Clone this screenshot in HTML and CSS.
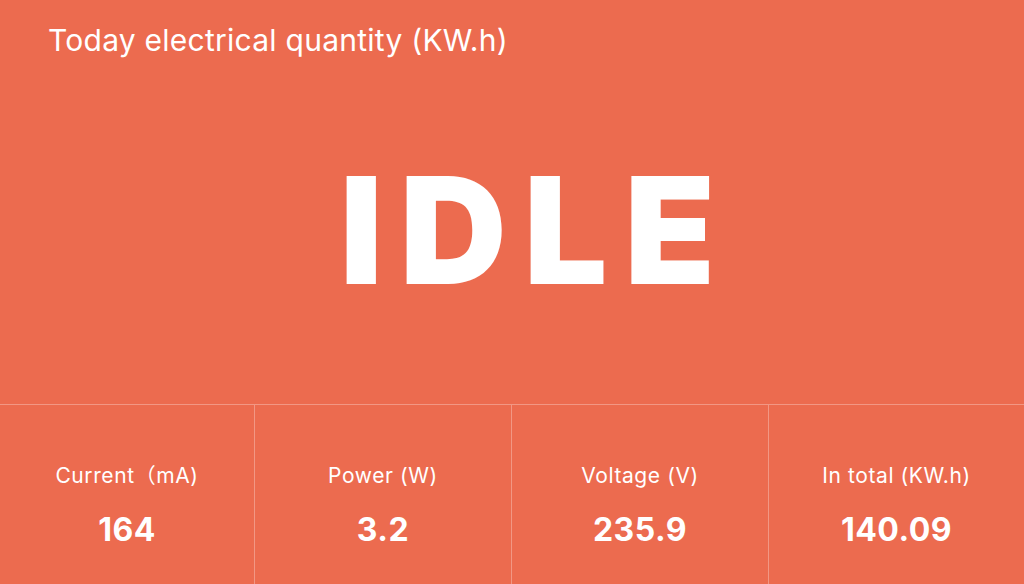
FILE: index.html
```html
<!DOCTYPE html>
<html>
<head>
<meta charset="utf-8">
<link rel="stylesheet" href="styles.css">
</head>
<body>
<div class="page">
  <div class="top">
    <div class="title">Today electrical quantity (KW.h)</div>
    <div class="status">IDLE</div>
  </div>
  <div class="stats">
    <div class="cell"><div class="label">Current（mA)</div><div class="value">164</div></div>
    <div class="cell"><div class="label">Power (W)</div><div class="value">3.2</div></div>
    <div class="cell"><div class="label">Voltage (V)</div><div class="value">235.9</div></div>
    <div class="cell"><div class="label">In total (KW.h)</div><div class="value">140.09</div></div>
  </div>
</div>
</body>
</html>
```
FILE: styles.css
```css
html, body {
  margin: 0;
  padding: 0;
}
body {
  background: #ec6b4f;
  color: #fff;
  font-family: Inter, "Noto Sans CJK SC", sans-serif;
}
.page {
  width: 1024px;
  height: 584px;
  display: flex;
  flex-direction: column;
  overflow: hidden;
}
.top {
  height: 404px;
  display: flex;
  flex-direction: column;
  box-sizing: border-box;
  padding: 21px 0 0 48px;
}
.title {
  font-size: 30px;
  line-height: 38px;
  font-weight: 400;
  letter-spacing: 0.25px;
  color: #fff;
}
.status {
  margin-top: 98px;
  text-align: center;
  font-family: Inter, sans-serif;
  font-weight: 900;
  font-size: 148px;
  line-height: 148px;
  letter-spacing: 17px;
}
.stats {
  flex: 1;
  display: grid;
  grid-template-columns: 254px 257px 257px 1fr;
  border-top: 1px solid rgba(255,255,255,0.3);
}
.cell {
  display: flex;
  flex-direction: column;
  align-items: center;
  border-left: 1px solid rgba(255,255,255,0.3);
  padding-top: 58px;
}
.cell:first-child {
  border-left: none;
}
.label {
  font-size: 21px;
  line-height: 26px;
  letter-spacing: 0.6px;
  color: #fff;
}
.value {
  margin-top: 22px;
  font-size: 32px;
  line-height: 38px;
  font-weight: 700;
  letter-spacing: 0.5px;
}
```
